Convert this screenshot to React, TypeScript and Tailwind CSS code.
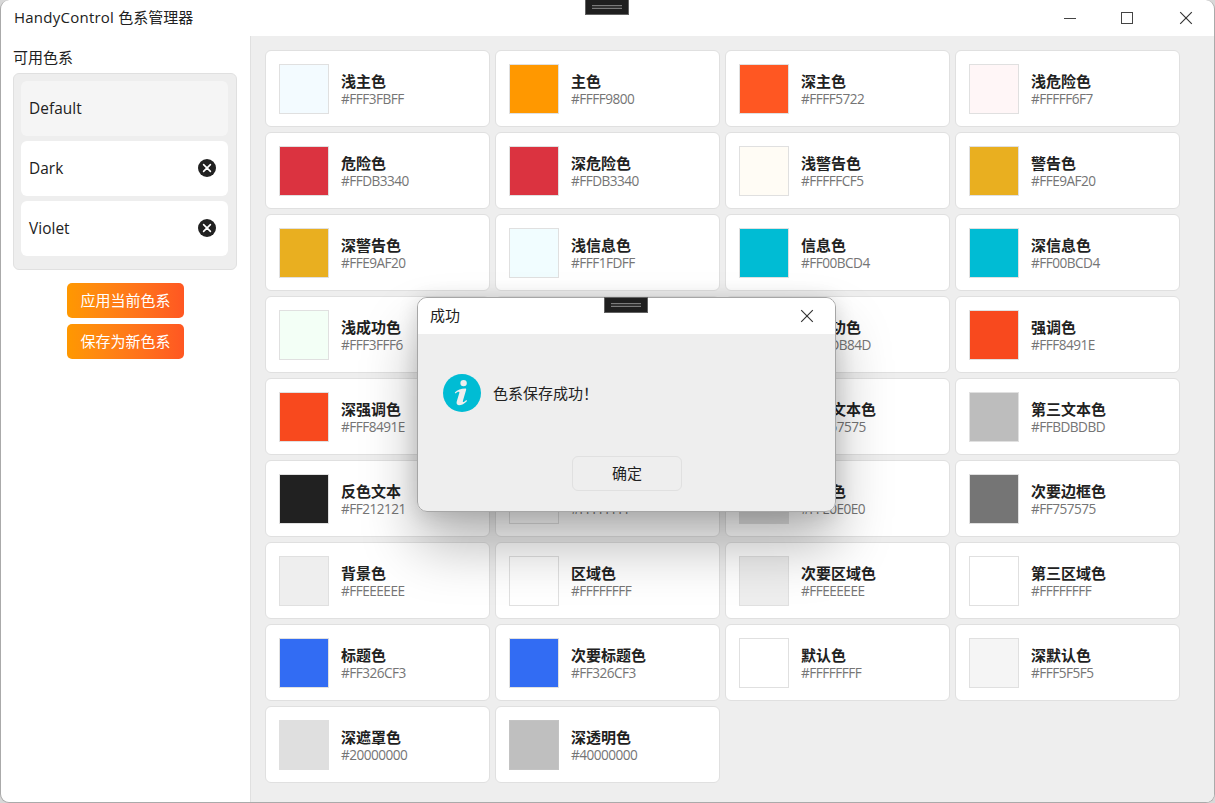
type Swatch = { name: string; code: string; fill: string; border?: string };

const swatches: Swatch[] = [
  { name: "浅主色", code: "#FFF3FBFF", fill: "#f3fbff" },
  { name: "主色", code: "#FFFF9800", fill: "#ff9800" },
  { name: "深主色", code: "#FFFF5722", fill: "#ff5722" },
  { name: "浅危险色", code: "#FFFFF6F7", fill: "#fff6f7" },
  { name: "危险色", code: "#FFDB3340", fill: "#db3340" },
  { name: "深危险色", code: "#FFDB3340", fill: "#db3340" },
  { name: "浅警告色", code: "#FFFFFCF5", fill: "#fffcf5" },
  { name: "警告色", code: "#FFE9AF20", fill: "#e9af20" },
  { name: "深警告色", code: "#FFE9AF20", fill: "#e9af20" },
  { name: "浅信息色", code: "#FFF1FDFF", fill: "#f1fdff" },
  { name: "信息色", code: "#FF00BCD4", fill: "#00bcd4" },
  { name: "深信息色", code: "#FF00BCD4", fill: "#00bcd4" },
  { name: "浅成功色", code: "#FFF3FFF6", fill: "#f3fff6" },
  { name: "成功色", code: "#FF2DB84D", fill: "#2db84d" },
  { name: "深成功色", code: "#FF2DB84D", fill: "#2db84d" },
  { name: "强调色", code: "#FFF8491E", fill: "#f8491e" },
  { name: "深强调色", code: "#FFF8491E", fill: "#f8491e" },
  { name: "主文本色", code: "#FF212121", fill: "#212121" },
  { name: "次要文本色", code: "#FF757575", fill: "#757575" },
  { name: "第三文本色", code: "#FFBDBDBD", fill: "#bdbdbd" },
  { name: "反色文本", code: "#FF212121", fill: "#212121" },
  { name: "文本图标色", code: "#FFFFFFFF", fill: "#ffffff" },
  { name: "边框色", code: "#FFE0E0E0", fill: "#e0e0e0" },
  { name: "次要边框色", code: "#FF757575", fill: "#757575" },
  { name: "背景色", code: "#FFEEEEEE", fill: "#eeeeee" },
  { name: "区域色", code: "#FFFFFFFF", fill: "#ffffff" },
  { name: "次要区域色", code: "#FFEEEEEE", fill: "#eeeeee" },
  { name: "第三区域色", code: "#FFFFFFFF", fill: "#ffffff" },
  { name: "标题色", code: "#FF326CF3", fill: "#326cf3" },
  { name: "次要标题色", code: "#FF326CF3", fill: "#326cf3" },
  { name: "默认色", code: "#FFFFFFFF", fill: "#ffffff" },
  { name: "深默认色", code: "#FFF5F5F5", fill: "#f5f5f5" },
  { name: "深遮罩色", code: "#20000000", fill: "#dfdfdf", border: "#dfdfdf" },
  { name: "深透明色", code: "#40000000", fill: "#bfbfbf", border: "#c3c3c3" },
];

const themes = [
  { name: "Default", selected: true },
  { name: "Dark", selected: false },
  { name: "Violet", selected: false },
];

function DebugHandle() {
  return (
    <div className="flex h-4 w-11 items-center justify-center border border-[#626262] bg-[#1f1f1f]">
      <div className="h-1 w-[30px] border-y border-[#7a7a7a] bg-[#333333]" />
    </div>
  );
}

function CloseGlyph() {
  return (
    <svg width="14" height="14" viewBox="0 0 14 14" fill="none" stroke="#333" strokeWidth="1.15">
      <path d="M1.2 1.2 12.8 12.8M12.8 1.2 1.2 12.8" />
    </svg>
  );
}

function RemoveIcon() {
  return (
    <svg width="18" height="18" viewBox="0 0 18 18">
      <circle cx="9" cy="9" r="9" fill="#212121" />
      <path d="M5.6 5.6 12.4 12.4M12.4 5.6 5.6 12.4" stroke="#fff" strokeWidth="1.6" strokeLinecap="round" />
    </svg>
  );
}

function InfoIcon() {
  return (
    <svg width="38" height="38" viewBox="0 0 38 38">
      <circle cx="19" cy="19" r="19" fill="#00bcd4" />
      <g fill="#eeeeee">
        <circle cx="20.6" cy="9.1" r="3.2" />
        <path d="M11.8 18.5C14.4 15.9 18 14.6 22.2 14.5C23.1 14.5 23.3 15 23.1 15.9L20 26.6C19.6 28 20 28.4 20.9 27.9C21.7 27.4 22.5 26.8 23.3 26L24.1 26.9C21.5 29.5 18.6 31.2 15.9 31.2C13.7 31.2 13.2 29.5 13.8 27.3L16.3 18.9C16.6 17.8 16 17.4 15 17.8C14.1 18.2 13.3 18.8 12.5 19.5Z" />
      </g>
    </svg>
  );
}

function SwatchCard({ item }: { item: Swatch }) {
  return (
    <div className="flex h-[77px] w-[225px] items-start rounded-md border border-[#e0e0e0] bg-white pt-[13px] pl-[13px]">
      <div
        className="size-[50px] shrink-0 border"
        style={{ backgroundColor: item.fill, borderColor: item.border ?? "#e0e0e0" }}
      />
      <div className="flex flex-col pt-2 pl-3 whitespace-nowrap">
        <span className="h-[18px] text-[15px] leading-[18px] font-bold text-[#212121]">{item.name}</span>
        <span className="h-[18px] text-[13.6px] leading-[18px] tracking-[-0.52px] text-[#757575]">{item.code}</span>
      </div>
    </div>
  );
}

function SuccessDialog() {
  return (
    <div className="absolute top-[297px] left-[417px] flex h-[215px] w-[419px] flex-col overflow-hidden rounded-[10px] border border-[#a6a6a6] bg-[#eeeeee]">
      <div className="flex h-9 shrink-0 items-center justify-between bg-white pr-[21px] pl-3">
        <span className="pb-0.5">成功</span>
        <CloseGlyph />
      </div>
      <div className="flex h-[118px] items-center gap-3 pl-[25px]">
        <InfoIcon />
        <span>色系保存成功！</span>
      </div>
      <button className="mt-1 ml-[154px] h-[35px] w-[110px] rounded-md border border-[#e0e0e0] pb-0.5">确定</button>
    </div>
  );
}

export default function App() {
  return (
    <div className="relative h-[803px] w-[1215px] overflow-hidden bg-[#d8d8d8] font-['Open_Sans','Noto_Sans_CJK_SC',sans-serif] text-[15px] leading-5 text-[#212121]">
      <div className="flex h-[803px] flex-col overflow-hidden rounded-[9px] border-x border-b border-[#aaaaaa] bg-white">
        <header className="flex h-9 shrink-0 items-center justify-between pr-[21px] pl-[13px]">
          <span className="pb-0.5">
            <span className="tracking-[0.24px]">HandyControl </span>色系管理器
          </span>
          <div className="flex items-center">
            <div className="mr-[45px] h-px w-3 bg-[#444444]" />
            <div className="mr-[46px] size-3 border border-[#444444]" />
            <CloseGlyph />
          </div>
        </header>
        <main className="flex min-h-0 flex-1">
          <aside className="w-[250px] shrink-0 border-r border-[#e0e0e0] pt-[11px] pl-3">
            <div className="h-[26px]">可用色系</div>
            <div className="flex h-[197px] w-[224px] flex-col gap-[5px] rounded-md border border-[#e0e0e0] bg-[#eeeeee] pt-[7px] pr-2 pl-[7px]">
              {themes.map((t) => (
                <div
                  key={t.name}
                  className={`flex h-[55px] items-center justify-between rounded-md pr-3 pb-px pl-2 ${t.selected ? "bg-[#f5f5f5]" : "bg-white"}`}
                >
                  <span className="pt-px text-[15.4px] tracking-[0.05px]">{t.name}</span>
                  {!t.selected && <RemoveIcon />}
                </div>
              ))}
            </div>
            <div className="ml-[54px] flex w-[117px] flex-col gap-1.5 pt-[13px] text-white">
              <button className="h-[35px] rounded-[5px] bg-linear-to-r from-[#ff9800] to-[#ff5722] pb-0.5">应用当前色系</button>
              <button className="h-[35px] rounded-[5px] bg-linear-to-r from-[#ff9800] to-[#ff5722] pb-0.5">保存为新色系</button>
            </div>
          </aside>
          <section className="flex-1 bg-[#eeeeee] pt-3.5 pl-3.5">
            <div className="grid w-[915px] grid-cols-4 gap-[5px]">
              {swatches.map((s, i) => (
                <SwatchCard key={i} item={s} />
              ))}
            </div>
          </section>
        </main>
      </div>
      <div className="absolute -top-px left-[585px]">
        <DebugHandle />
      </div>
      <div className="absolute top-[297px] left-[417px] h-[215px] w-[419px] rounded-[10px] shadow-[0_34px_56px_rgba(0,0,0,0.28),0_2px_20px_rgba(0,0,0,0.14)]" />
      <SuccessDialog />
      <div className="absolute top-[297px] left-[604px]">
        <DebugHandle />
      </div>
    </div>
  );
}
